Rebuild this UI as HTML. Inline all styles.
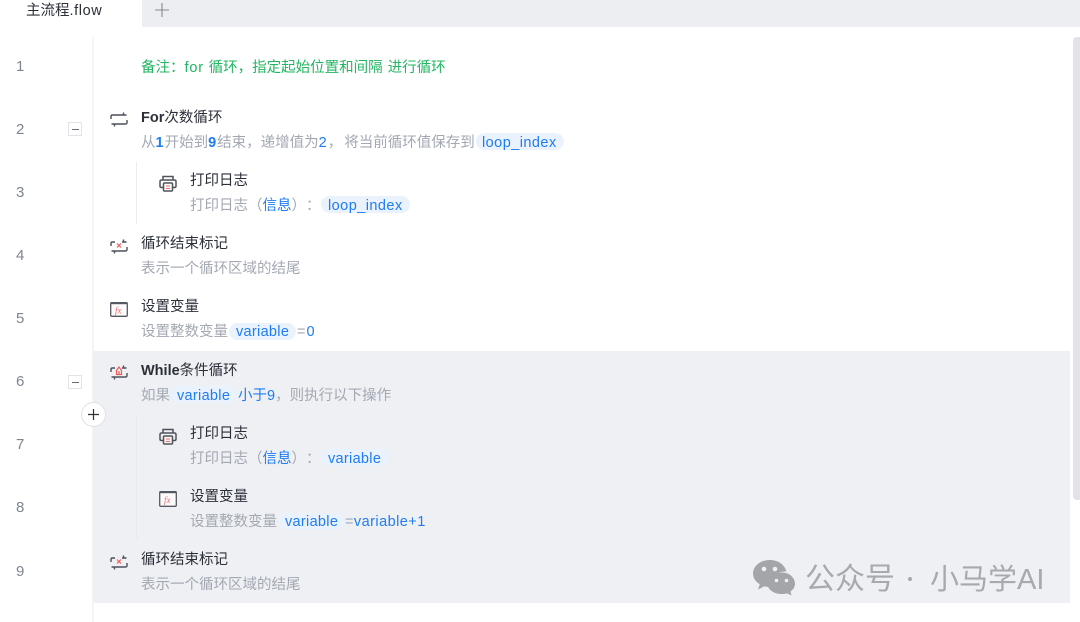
<!DOCTYPE html>
<html lang="zh"><head><meta charset="utf-8"><style>
html,body{margin:0;padding:0;background:#fff}
#p{position:relative;width:1080px;height:622px;overflow:hidden;background:#fff;font-family:"Liberation Sans","Noto Sans CJK SC",sans-serif;font-size:14.5px;color:#a3a8b2;text-spacing-trim:space-all}
.a{position:absolute}
.t{position:absolute;white-space:nowrap;line-height:20px;height:20px}
.h{color:#2b2f38}
.b{color:#1f7cf2}
.pill{position:absolute;height:17px;border-radius:9px;background:#e9f2fd}
.n{position:absolute;left:16px;color:#7d8592;font-size:15px;line-height:20px}
.m{position:absolute;left:68px;width:12px;height:12px;border:1px solid #e1e3e6;background:#fff;box-sizing:content-box}
.m:after{content:"";position:absolute;left:3px;top:5.500px;width:7px;height:1px;background:#6b6f76}
svg{position:absolute;overflow:visible}
</style></head><body><div id="p">
<div class="a" style="left:142px;top:0;width:938px;height:27px;background:#eceef2"></div>
<div class="t" style="left:26px;top:1px;color:#2b2f38;font-size:14.500px">主流程<span style="letter-spacing:.6px">.flow</span></div>
<svg style="left:155px;top:3px" width="14" height="14"><path d="M7 0V14M0 7H14" stroke="#858b94" stroke-width="1.1" fill="none"/></svg>

<div class="a" style="left:92px;top:37px;width:2px;height:585px;background:#f4f5f6"></div>
<div class="a" style="left:93px;top:351px;width:977px;height:252px;background:#eef0f4"></div>
<div class="a" style="left:1073px;top:37px;width:7px;height:463px;border-radius:4px 0 0 4px;background:#e3e3e7"></div>
<div class="a" style="left:135.500px;top:162px;width:1.500px;height:62px;background:#ecedf0"></div>
<div class="a" style="left:135.500px;top:415px;width:1.500px;height:124px;background:#e9eaee"></div>

<div class="n" style="top:57px">1</div>
<div class="n" style="top:120px">2</div>
<div class="n" style="top:183px">3</div>
<div class="n" style="top:246px">4</div>
<div class="n" style="top:309px">5</div>
<div class="n" style="top:372px">6</div>
<div class="n" style="top:435px">7</div>
<div class="n" style="top:498px">8</div>
<div class="n" style="top:562px">9</div>
<div class="m" style="top:122px"></div>
<div class="m" style="top:375px"></div>
<div class="a" style="left:81px;top:402px;width:23px;height:23px;border-radius:50%;background:#fff;border:1px solid #dfe1e5"></div>
<svg style="left:88px;top:409px" width="11" height="11"><path d="M5.500 0V11M0 5.500H11" stroke="#2c2f35" stroke-width="1.2"/></svg>

<div class="t" style="left:141px;top:58px;color:#22b562">备注：<span style="letter-spacing:.8px">for </span>循环，指定起始位置和间隔<span style="letter-spacing:1px"> </span>进行循环</div>

<!-- row 2 -->
<svg style="left:110px;top:112px" width="18" height="15" fill="none" stroke="#4c5059" stroke-width="1.400"><path d="M1 7V4.500Q1 3 2.500 3H16.500M13.500 .5V3M17 8V10.500Q17 12 15.500 12H1.500M4.500 14.500V12"/></svg>
<div class="t h" style="left:141px;top:108px"><b>For</b>次数循环</div>
<div class="pill" style="left:476px;top:133px;width:88px"></div>
<div class="t" style="left:141px;top:133px">从<span class="b" style="font-weight:700;padding-right:1px">1</span>开始到<span class="b" style="font-weight:700;padding-right:1px">9</span>结束，递增值为<span class="b" style="padding-right:1px">2</span><span style="letter-spacing:2px">，</span>将当前循环值保存到</div>
<div class="t b" style="left:482px;top:133px;letter-spacing:.45px">loop_index</div>

<!-- row 3 -->
<svg style="left:159px;top:175px" width="18" height="17" fill="none" stroke="#4f535b" stroke-width="1.500"><path d="M4 5V1.500H14V5M4 12.500H2.500Q1 12.500 1 11V6.500Q1 5 2.500 5H15.500Q17 5 17 6.500V11Q17 12.500 15.500 12.500H14"/><rect x="4.500" y="8" width="9" height="8" rx="1" fill="#fff"/><path d="M7 11H11M7 13.500H11" stroke="#ef6a6a" stroke-width="1"/></svg>
<div class="t h" style="left:190px;top:171px">打印日志</div>
<div class="pill" style="left:321px;top:196px;width:89px"></div>
<div class="t" style="left:190px;top:196px">打印日志（<span class="b">信息</span>）：</div>
<div class="t b" style="left:328px;top:196px;letter-spacing:.45px">loop_index</div>

<!-- row 4 -->
<svg style="left:110px;top:239px" width="18" height="15" fill="none" stroke="#4c5059" stroke-width="1.400"><path d="M1 7V4.500Q1 3 2.500 3H5M12 3H16.500M13.500 .5V3M17 8V10.500Q17 12 15.500 12H1.500M4.500 14.500V12"/><path d="M7 4.500 11 8.500M11 4.500 7 8.500" stroke="#ef5a5a" stroke-width="1.200"/></svg>
<div class="t h" style="left:141px;top:234px">循环结束标记</div>
<div class="t" style="left:141px;top:259px">表示一个循环区域的结尾</div>

<!-- row 5 -->
<svg style="left:110px;top:302px" width="18" height="15" fill="none"><rect x=".7" y=".7" width="16.600" height="13.600" rx="1" stroke="#555962" stroke-width="1.300" fill="#fdfbfb"/><path d="M1 1.200H17" stroke="#555962" stroke-width="2"/><text x="5" y="11.500" font-family="Liberation Serif" font-style="italic" font-size="9" fill="#ef6a6a">fx</text></svg>
<div class="t h" style="left:141px;top:297px">设置变量</div>
<div class="pill" style="left:229px;top:323px;width:67px"></div>
<div class="t" style="left:141px;top:322px">设置整数变量</div>
<div class="t b" style="left:236px;top:322px;letter-spacing:.3px">variable</div>
<div class="t" style="left:297px;top:322px">=<span class="b" style="padding-left:1px">0</span></div>

<!-- row 6 -->
<svg style="left:110px;top:365px" width="18" height="15" fill="none" stroke="#4c5059" stroke-width="1.400"><path d="M1 7V4.500Q1 3 2.500 3H5M12 3H16.500M13.500 .5V3M17 8V10.500Q17 12 15.500 12H1.500M4.500 14.500V12"/><path d="M9 2 6.500 5.500V9.500H11.500V5.500ZM9 6V9.500" stroke="#ef5a5a" stroke-width="1.200"/></svg>
<div class="t h" style="left:141px;top:361px"><b>While</b>条件循环</div>
<div class="pill" style="left:170px;top:386px;width:67px"></div>
<div class="t" style="left:141px;top:386px">如果</div>
<div class="t b" style="left:177px;top:386px;letter-spacing:.3px">variable</div>
<div class="t" style="left:238px;top:386px"><span class="b">小于9</span>，则执行以下操作</div>

<!-- row 7 -->
<svg style="left:159px;top:428px" width="18" height="17" fill="none" stroke="#4f535b" stroke-width="1.500"><path d="M4 5V1.500H14V5M4 12.500H2.500Q1 12.500 1 11V6.500Q1 5 2.500 5H15.500Q17 5 17 6.500V11Q17 12.500 15.500 12.500H14"/><rect x="4.500" y="8" width="9" height="8" rx="1" fill="#fdf3f3"/><path d="M7 11H11M7 13.500H11" stroke="#ef6a6a" stroke-width="1"/></svg>
<div class="t h" style="left:190px;top:424px">打印日志</div>
<div class="pill" style="left:321px;top:449px;width:68px"></div>
<div class="t" style="left:190px;top:449px">打印日志（<span class="b">信息</span>）：</div>
<div class="t b" style="left:328px;top:449px;letter-spacing:.3px">variable</div>

<!-- row 8 -->
<svg style="left:159px;top:491px" width="18" height="16" fill="none"><rect x=".7" y=".7" width="16.600" height="14.600" rx="1" stroke="#555962" stroke-width="1.300" fill="#fdfbfb"/><path d="M1 1.200H17" stroke="#555962" stroke-width="2"/><text x="5" y="12" font-family="Liberation Serif" font-style="italic" font-size="9" fill="#ef6a6a">fx</text></svg>
<div class="t h" style="left:190px;top:487px">设置变量</div>
<div class="pill" style="left:278px;top:513px;width:67px"></div>
<div class="t" style="left:190px;top:512px">设置整数变量</div>
<div class="t b" style="left:285px;top:512px;letter-spacing:.3px">variable</div>
<div class="t" style="left:345px;top:512px;letter-spacing:.45px">=<span class="b">variable+1</span></div>

<!-- row 9 -->
<svg style="left:110px;top:555px" width="18" height="15" fill="none" stroke="#4c5059" stroke-width="1.400"><path d="M1 7V4.500Q1 3 2.500 3H5M12 3H16.500M13.500 .5V3M17 8V10.500Q17 12 15.500 12H1.500M4.500 14.500V12"/><path d="M7 4.500 11 8.500M11 4.500 7 8.500" stroke="#ef5a5a" stroke-width="1.200"/></svg>
<div class="t h" style="left:141px;top:550px">循环结束标记</div>
<div class="t" style="left:141px;top:575px">表示一个循环区域的结尾</div>

<!-- watermark -->
<svg style="left:753px;top:560px" width="42" height="34"><path d="M17 0C7.600 0 0 5.900 0 13.500 0 18 2.700 21.800 6.800 24.300L5 29.500 11.300 26.300C13.500 26.900 15.200 27.100 17.500 27 16.500 17 24 11 33.500 11.500 31.500 4.500 25 0 17 0Z" fill="#a4a5a8"/><path d="M29 12.500C21 12.500 14.500 17.800 14.500 23.700 14.500 29.600 21 34 29 34 30.800 34 32.500 33.800 34 33.400L38.500 35.500 37.500 31.500C40.300 29.500 42 26.800 42 23.700 42 17.800 36.500 12.500 29 12.500Z" fill="#a4a5a8"/><circle cx="11" cy="9" r="2.300" fill="#eef0f4"/><circle cx="22" cy="9" r="2.300" fill="#eef0f4"/><circle cx="23.500" cy="20.500" r="1.800" fill="#eef0f4"/><circle cx="33.500" cy="20.500" r="1.800" fill="#eef0f4"/></svg>
<div class="t" style="left:805px;top:563px;height:34px;line-height:34px;font-size:30px;color:#a8a9ac">公众号</div>
<div class="a" style="left:908px;top:577px;width:4px;height:4px;border-radius:50%;background:#a8a9ac"></div>
<div class="t" style="left:930px;top:563px;height:34px;line-height:34px;font-size:29px;color:#a8a9ac">小马学AI</div>
</div></body></html>
